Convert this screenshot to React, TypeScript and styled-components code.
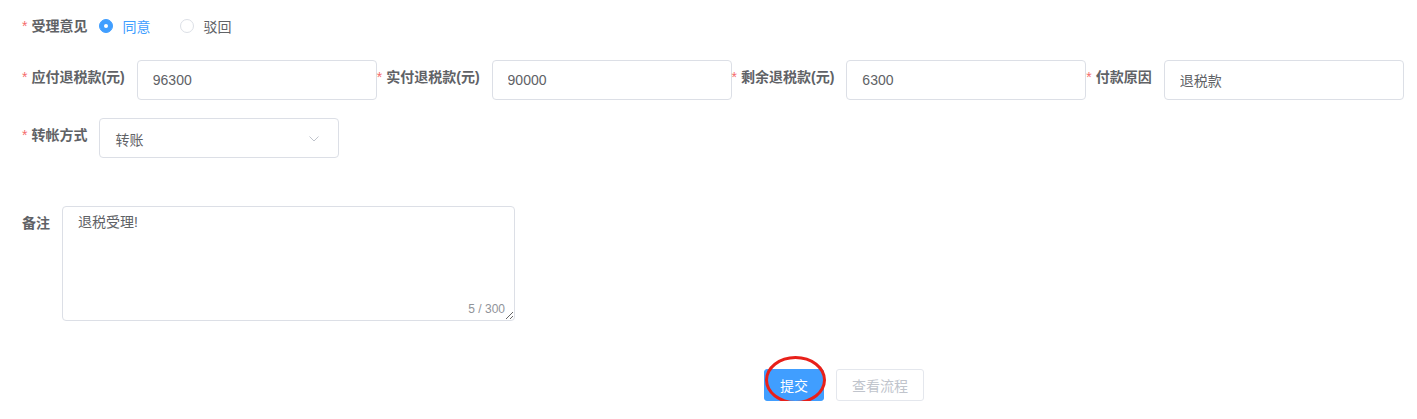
import styled, { createGlobalStyle, css } from 'styled-components';

const GlobalStyle = createGlobalStyle`
  body {
    margin: 0;
    background: #fff;
    font-family: "Liberation Sans", "Noto Sans CJK SC", sans-serif;
    color: #606266;
  }
`;

const Form = styled.div`
  padding: 9px 22px 0 22px;
`;

const Row = styled.div<{ $gap: number }>`
  display: flex;
  align-items: flex-start;
  margin-bottom: ${p => p.$gap}px;
`;

const Item = styled.div`
  display: flex;
  align-items: flex-start;
`;

const Label = styled.label<{ $required?: boolean }>`
  font-size: 14px;
  font-weight: 700;
  color: #606266;
  line-height: 34px;
  padding-right: 12px;
  white-space: nowrap;
  ${p =>
    p.$required &&
    css`
      &::before {
        content: '*';
        color: #f56c6c;
        margin-right: 4px;
        font-weight: 400;
      }
    `}
`;

const RadioGroup = styled.div`
  display: flex;
  align-items: center;
  height: 34px;
`;

const RadioOption = styled.label<{ $checked?: boolean }>`
  display: flex;
  align-items: center;
  margin-right: 30px;
  font-size: 14px;
  color: ${p => (p.$checked ? '#409eff' : '#606266')};
  cursor: pointer;
`;

const RadioDot = styled.span<{ $checked?: boolean }>`
  position: relative;
  width: 14px;
  height: 14px;
  box-sizing: border-box;
  border-radius: 50%;
  border: 1px solid ${p => (p.$checked ? '#409eff' : '#dcdfe6')};
  background: ${p => (p.$checked ? '#409eff' : '#fff')};
  margin-right: 9px;
  ${p =>
    p.$checked &&
    css`
      &::after {
        content: '';
        position: absolute;
        left: 50%;
        top: 50%;
        width: 4px;
        height: 4px;
        border-radius: 50%;
        background: #fff;
        transform: translate(-50%, -50%);
      }
    `}
`;

const TextInput = styled.input`
  width: 240px;
  height: 40px;
  box-sizing: border-box;
  border: 1px solid #dcdfe6;
  border-radius: 4px;
  padding: 0 15px;
  font-family: inherit;
  font-size: 14px;
  color: #606266;
  outline: none;
  background: #fff;
`;

const Select = styled.div`
  width: 240px;
  height: 40px;
  box-sizing: border-box;
  border: 1px solid #dcdfe6;
  border-radius: 4px;
  padding: 2px 19px 0 15px;
  display: flex;
  align-items: center;
  justify-content: space-between;
  font-size: 14px;
  color: #606266;
  background: #fff;
`;

const TextareaWrap = styled.div`
  position: relative;
  width: 453px;
  height: 115px;
`;

const Textarea = styled.textarea`
  width: 100%;
  height: 100%;
  box-sizing: border-box;
  border: 1px solid #dcdfe6;
  border-radius: 4px;
  padding: 5px 15px;
  font-family: inherit;
  font-size: 14px;
  line-height: 1.5;
  color: #606266;
  resize: vertical;
  outline: none;
`;

const Count = styled.span`
  position: absolute;
  right: 10px;
  bottom: 6px;
  font-size: 12px;
  line-height: 1;
  color: #909399;
  background: #fff;
`;

const Footer = styled.div`
  display: flex;
  gap: 12px;
  padding-left: 742px;
`;

const Button = styled.button<{ $primary?: boolean }>`
  height: 32px;
  box-sizing: border-box;
  padding: 0 15px;
  border-radius: 3px;
  font-family: inherit;
  font-size: 14px;
  cursor: pointer;
  border: 1px solid ${p => (p.$primary ? '#409eff' : '#e4e7ed')};
  background: ${p => (p.$primary ? '#409eff' : '#fff')};
  color: ${p => (p.$primary ? '#fff' : '#c0c4cc')};
`;

const Marked = styled.span`
  position: relative;
  display: inline-flex;
`;

const MarkRing = styled.span`
  position: absolute;
  left: 1px;
  top: -13px;
  width: 61px;
  height: 48px;
  box-sizing: border-box;
  border: 3px solid #e8201a;
  border-radius: 50%;
  pointer-events: none;
`;

const Chevron = () => (
  <svg width="10" height="6" viewBox="0 0 10 6" fill="none">
    <polyline points="0.5,0.5 5,5 9.5,0.5" stroke="#c0c4cc" strokeWidth="1" />
  </svg>
);

const amounts = [
  { label: '应付退税款(元)', value: '96300' },
  { label: '实付退税款(元)', value: '90000' },
  { label: '剩余退税款(元)', value: '6300' },
  { label: '付款原因', value: '退税款' },
];

export default function App() {
  return (
    <>
      <GlobalStyle />
      <Form>
        <Row $gap={17}>
          <Item>
            <Label $required>受理意见</Label>
            <RadioGroup>
              <RadioOption $checked>
                <RadioDot $checked />
                同意
              </RadioOption>
              <RadioOption>
                <RadioDot />
                驳回
              </RadioOption>
            </RadioGroup>
          </Item>
        </Row>
        <Row $gap={18}>
          {amounts.map(a => (
            <Item key={a.label}>
              <Label $required>{a.label}</Label>
              <TextInput readOnly value={a.value} />
            </Item>
          ))}
        </Row>
        <Row $gap={48}>
          <Item>
            <Label $required>转帐方式</Label>
            <Select>
              <span>转账</span>
              <Chevron />
            </Select>
          </Item>
        </Row>
        <Row $gap={48}>
          <Item>
            <Label>备注</Label>
            <TextareaWrap>
              <Textarea readOnly value="退税受理!" />
              <Count>5 / 300</Count>
            </TextareaWrap>
          </Item>
        </Row>
        <Footer>
          <Marked>
            <Button $primary>提交</Button>
            <MarkRing />
          </Marked>
          <Button>查看流程</Button>
        </Footer>
      </Form>
    </>
  );
}
